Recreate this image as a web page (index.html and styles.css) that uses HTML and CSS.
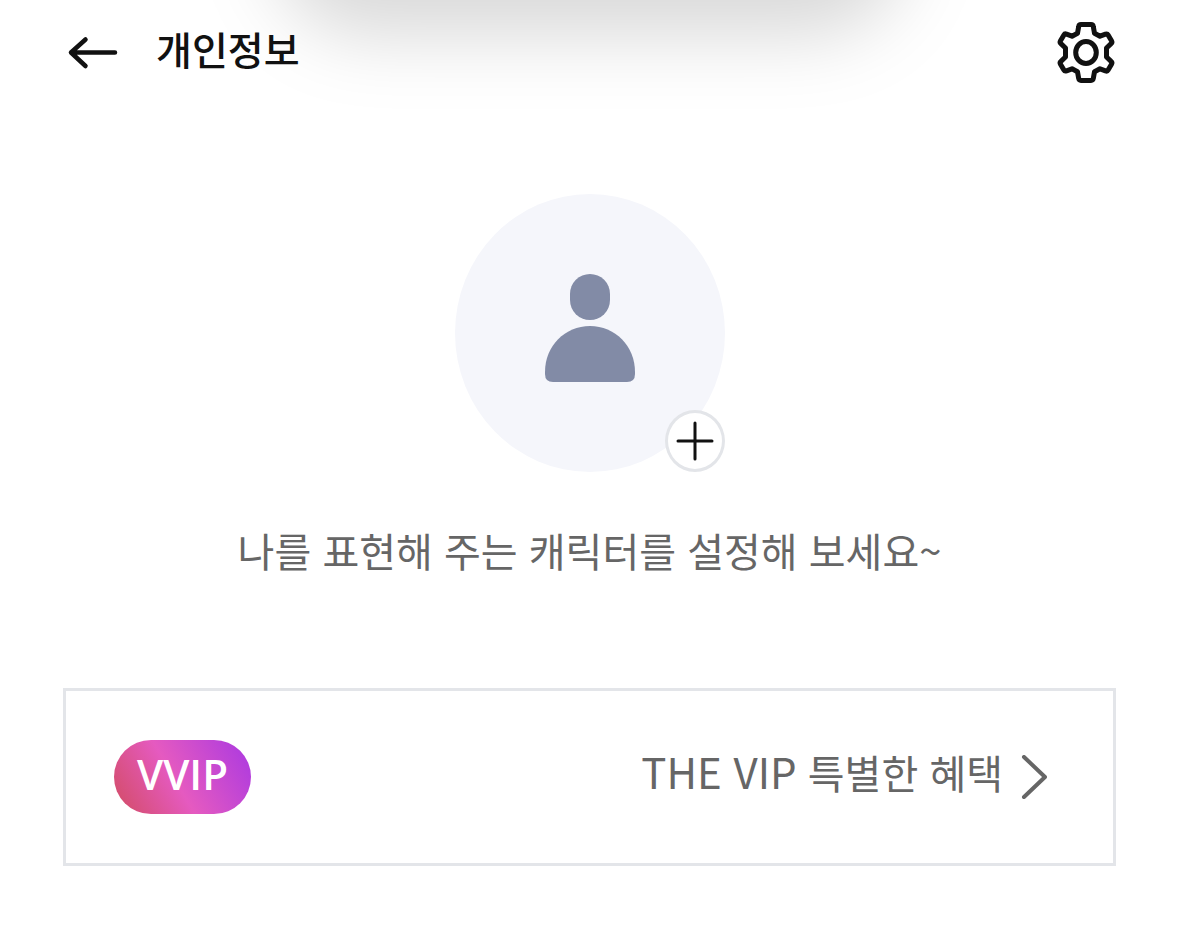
FILE: index.html
```html
<!DOCTYPE html>
<html lang="ko">
<head>
<meta charset="utf-8">
<meta name="viewport" content="width=device-width, initial-scale=1">
<title>개인정보</title>
<link rel="stylesheet" href="styles.css">
</head>
<body>
<div class="top-shade" aria-hidden="true"></div>
<header class="header">
  <button class="icon-button" type="button" aria-label="뒤로">
    <svg width="60" height="60" viewBox="0 0 60 60" fill="none" stroke="#111" stroke-width="4.500" stroke-linecap="round" stroke-linejoin="round"><path d="M51 30.500H7M21.500 17.500L7 30.500l14.500 13.500"/></svg>
  </button>
  <h1 class="title">개인정보</h1>
  <button class="icon-button" type="button" aria-label="설정">
    <svg width="58" height="64" viewBox="0 0 58 64" fill="none" stroke="#111" stroke-width="5" stroke-linejoin="round"><path d="M24 4.500h10q2 0 2.300 2l1.200 6.700 5.500 3 5.500-2.100q1.800-.6 2.600.8l3.400 5.800q1 1.700-.4 2.900L49.500 28v9l4.600 4.400q1.400 1.200.4 2.900l-3.400 5.800q-.8 1.400-2.600.8L43 48.800l-5.500 3-1.200 6.700q-.3 2-2.300 2H24q-2 0-2.300-2L20.500 51.800 15 48.800l-5.500 2.100q-1.800.6-2.600-.8l-3.400-5.800q-1-1.700.4-2.900L8.500 37v-9l-4.600-4.400q-1.400-1.200-.4-2.900l3.400-5.800q.8-1.400 2.600-.8L15 16.200l5.500-3 1.200-6.700q.3-2 2.300-2Z"/><ellipse cx="29" cy="32.500" rx="10.300" ry="11"/></svg>
  </button>
</header>
<main class="content">
  <section class="profile">
    <div class="avatar">
      <svg class="person" width="90" height="108" viewBox="0 0 90 108" fill="#828ba6" aria-hidden="true"><rect x="25" y="0" width="40" height="46" rx="20"/><path d="M0 98C0 72 20 52 45 52s45 20 45 46v2q0 8-8 8H8q-8 0-8-8Z"/></svg>
      <button class="add" type="button" aria-label="캐릭터 추가">
        <svg width="40" height="40" viewBox="0 0 40 40" stroke="#111" stroke-width="3" stroke-linecap="round"><path d="M20 2v36M3 20h34"/></svg>
      </button>
    </div>
    <p class="message">나를 표현해 주는 캐릭터를 설정해 보세요~</p>
  </section>
  <a class="card" href="#vip">
    <span class="badge">VVIP</span>
    <span class="benefit"><span class="latin">THE VIP</span> 특별한 혜택</span>
    <svg width="26" height="44" viewBox="0 0 26 44" fill="none" stroke="#666" stroke-width="4" stroke-linecap="round" stroke-linejoin="round" aria-hidden="true"><path d="M3 2l21 20L3 42"/></svg>
  </a>
</main>
</body>
</html>
```
FILE: styles.css
```css
* {
  box-sizing: border-box;
}

body {
  margin: 0;
  background: #fff;
  color: #111;
  font-family: "Noto Sans CJK KR", sans-serif;
  overflow-x: hidden;
}

button {
  padding: 0;
  border: 0;
  background: none;
  cursor: pointer;
}

svg {
  display: block;
}

/* Soft shadow cast down from above the page */
.top-shade {
  position: absolute;
  top: -160px;
  left: 23%;
  right: 23%;
  height: 196px;
  border-radius: 100px;
  background: rgba(0, 0, 0, 0.15);
  filter: blur(36px);
  pointer-events: none;
}

.header {
  position: relative;
  display: flex;
  align-items: center;
  gap: 32px;
  height: 104px;
  padding: 0 64px;
}

.icon-button {
  flex: none;
}

.title {
  flex: 1;
  margin: 0;
  padding-bottom: 8px;
  font-size: 39px;
  font-weight: 500;
  line-height: 56px;
}

.content {
  padding: 90px 63px 64px;
}

.profile {
  display: flex;
  flex-direction: column;
  align-items: center;
}

.avatar {
  position: relative;
  display: flex;
  justify-content: center;
  width: 270px;
  height: 278px;
  padding-top: 80px;
  border-radius: 50%;
  background: #f5f6fb;
}

.add {
  position: absolute;
  right: 0;
  bottom: 0;
  display: grid;
  place-items: center;
  width: 60px;
  height: 62px;
  border: 3px solid #e3e5e9;
  border-radius: 50%;
  background: #fff;
}

.message {
  margin: 50px 0 110px;
  color: #666;
  font-size: 40px;
  line-height: 56px;
  text-align: center;
}

.card {
  display: flex;
  align-items: center;
  gap: 18px;
  min-height: 178px;
  padding: 0 66px 0 48px;
  border: 3px solid #e3e5e9;
  color: #666;
  text-decoration: none;
}

.badge {
  padding: 0 23px 6px;
  border-radius: 37px;
  background: linear-gradient(60deg, #d44d6c 5%, #e55ac0 45%, #a938e2 100%);
  color: #fff;
  font-family: "Open Sans", sans-serif;
  font-size: 42px;
  font-weight: 600;
  line-height: 68px;
}

.benefit {
  flex: 1;
  padding-bottom: 12px;
  font-size: 40px;
  line-height: 56px;
  text-align: right;
}

.latin {
  font-size: 42px;
}
```
